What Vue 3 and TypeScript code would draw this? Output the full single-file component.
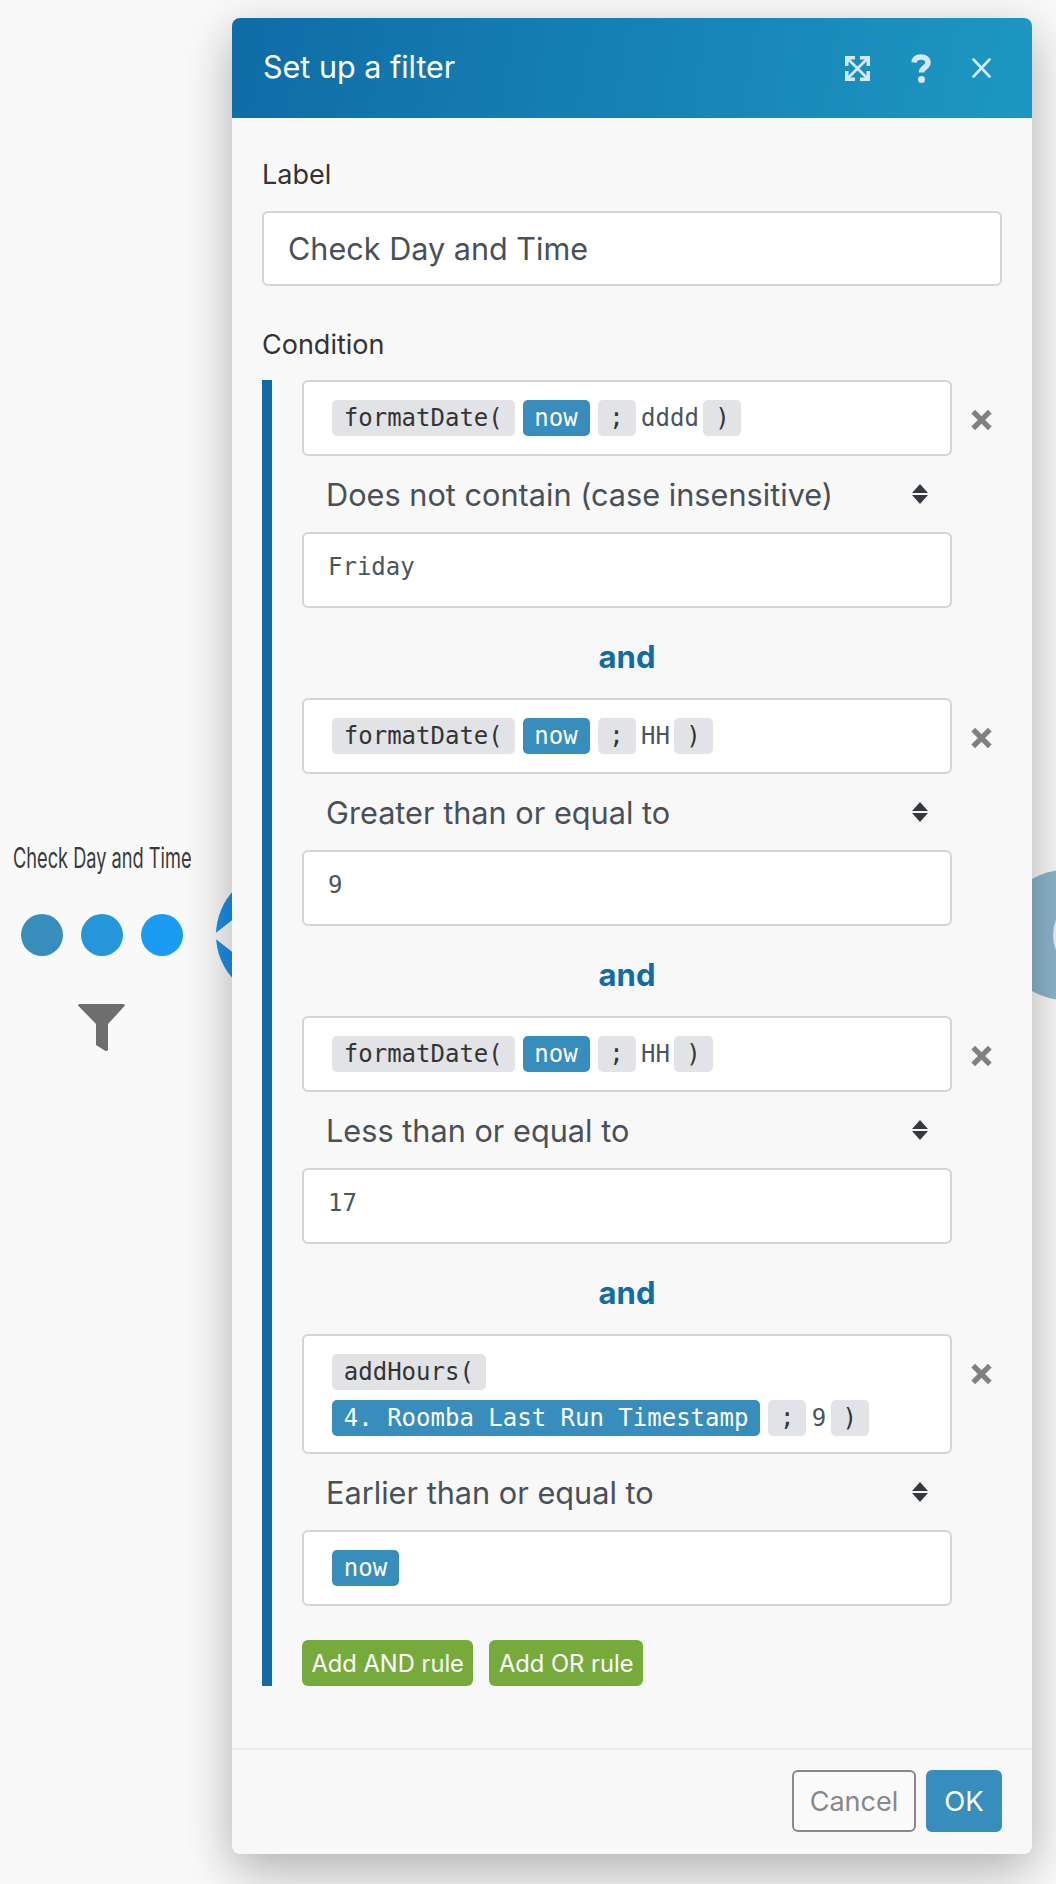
<script setup lang="ts">
type Part = { kind: 'fn' | 'var' | 'text'; text: string }
type Rule = {
  lines: Part[][]
  operator: string
  value: Part[]
}

const fn = (text: string): Part => ({ kind: 'fn', text })
const vr = (text: string): Part => ({ kind: 'var', text })
const tx = (text: string): Part => ({ kind: 'text', text })

const rules: Rule[] = [
  {
    lines: [[fn('formatDate('), vr('now'), fn(';'), tx('dddd'), fn(')')]],
    operator: 'Does not contain (case insensitive)',
    value: [tx('Friday')],
  },
  {
    lines: [[fn('formatDate('), vr('now'), fn(';'), tx('HH'), fn(')')]],
    operator: 'Greater than or equal to',
    value: [tx('9')],
  },
  {
    lines: [[fn('formatDate('), vr('now'), fn(';'), tx('HH'), fn(')')]],
    operator: 'Less than or equal to',
    value: [tx('17')],
  },
  {
    lines: [
      [fn('addHours(')],
      [vr('4. Roomba Last Run Timestamp'), fn(';'), tx('9'), fn(')')],
    ],
    operator: 'Earlier than or equal to',
    value: [vr('now')],
  },
]
</script>

<template>
  <div class="page">
    <div class="scenario">
      <span class="node-title">Check Day and Time</span>
      <span class="dot dot-a"></span>
      <span class="dot dot-b"></span>
      <span class="dot dot-c"></span>
      <svg class="funnel" viewBox="0 0 47 47">
        <path d="M1 0h45l1 1.500L30 20v26l-1.500 1h-1L18 41V20L0 1.500z" fill="#6e6e6e" />
      </svg>
      <div class="module module-left">
        <span class="notch"></span>
      </div>
      <div class="module module-right">
        <span class="module-inner"></span>
      </div>
    </div>

    <div class="modal">
      <header class="modal-head">
        <h1 class="modal-title">Set up a filter</h1>
        <svg class="head-icon icon-expand" viewBox="0 0 25 25">
          <path d="M0 0h10v3.500H3.500V10H0zM15 0h10v10h-3.500V3.500H15zM0 15h3.500v6.500H10V25H0zM21.500 15H25v10H15v-3.500h6.500z" fill="#d2e9f4" />
          <path d="M3 3l19 19M22 3L3 22" fill="none" stroke="#d2e9f4" stroke-width="2.800" />
        </svg>
        <svg class="head-icon icon-help" viewBox="0 0 20 29">
          <path d="M3 8.500C3.500 4.500 6.500 3 10 3c4 0 7 2 7 5.500 0 5-6.500 5-6.500 10" fill="none" stroke="#d2e9f4" stroke-width="5.500" />
          <circle cx="10.500" cy="25.500" r="3.500" fill="#d2e9f4" />
        </svg>
        <svg class="head-icon icon-close" viewBox="0 0 19 20">
          <path d="M1.500 1.500l16 17M17.500 1.500l-16 17" fill="none" stroke="#d2e9f4" stroke-width="2.600" stroke-linecap="round" />
        </svg>
      </header>

      <div class="modal-body">
        <div class="field-label">Label</div>
        <div class="text-input">Check Day and Time</div>

        <div class="field-label condition-label">Condition</div>
        <div class="condition">
          <template v-for="(rule, i) in rules" :key="i">
            <div v-if="i > 0" class="and-sep">and</div>
            <div class="rule-row">
              <div class="token-box" :class="{ 'token-box-multi': rule.lines.length > 1 }">
                <div v-for="(line, j) in rule.lines" :key="j" class="token-line">
                  <span v-for="(part, k) in line" :key="k" :class="['part', 'part-' + part.kind]">{{ part.text }}</span>
                </div>
              </div>
              <svg class="rule-remove" viewBox="0 0 24 24">
                <path d="M2.500 2.500l19 19M21.500 2.500l-19 19" fill="none" stroke="#808080" stroke-width="6" />
              </svg>
            </div>
            <div class="operator">
              <span>{{ rule.operator }}</span>
              <svg class="updown" viewBox="0 0 16 20">
                <path d="M8 0l8 9H0zM0 11h16l-8 9z" fill="#343a40" />
              </svg>
            </div>
            <div class="token-box">
              <div class="token-line">
                <span v-for="(part, k) in rule.value" :key="k" :class="['part', 'part-' + part.kind, 'value-' + part.kind]">{{ part.text }}</span>
              </div>
            </div>
          </template>
          <div class="add-rules">
            <button class="btn-green">Add AND rule</button>
            <button class="btn-green">Add OR rule</button>
          </div>
        </div>
      </div>

      <footer class="modal-foot">
        <button class="btn-cancel">Cancel</button>
        <button class="btn-ok">OK</button>
      </footer>
    </div>
  </div>
</template>

<style>
body {
  background: #f9f9f9;
}
</style>

<style scoped>
.page {
  position: relative;
  width: 1056px;
  height: 1884px;
  overflow: hidden;
  padding-top: 18px;
  box-sizing: border-box;
  background: #f9f9f9;
  font-family: Inter, "Liberation Sans", sans-serif;
}

/* the scenario canvas behind the dialog */
.scenario {
  position: absolute;
  inset: 0;
}

.node-title {
  position: absolute;
  left: 13px;
  top: 841px;
  font-size: 28px;
  line-height: 34px;
  color: #3a3a3a;
  white-space: nowrap;
  transform: scaleX(0.65);
  transform-origin: left center;
}

.dot {
  position: absolute;
  top: 914px;
  width: 42px;
  height: 42px;
  border-radius: 50%;
}

.dot-a {
  left: 21px;
  background: #378dbb;
}

.dot-b {
  left: 81px;
  background: #2596d9;
}

.dot-c {
  left: 141px;
  background: #1c9bf2;
}

.funnel {
  position: absolute;
  left: 78px;
  top: 1004px;
  width: 47px;
  height: 47px;
}

.module {
  position: absolute;
  width: 130px;
  height: 130px;
  border-radius: 50%;
  top: 870px;
}

.module-left {
  left: 216px;
  background: #1b8fe8;
}

.notch {
  position: absolute;
  left: -4px;
  top: 47px;
  width: 0;
  height: 0;
  border-top: 19px solid transparent;
  border-bottom: 19px solid transparent;
  border-left: 0;
  border-right: 24px solid #fafafa;
}

.module-right {
  left: 1000px;
  background: #8db5cb;
}

.module-inner {
  position: absolute;
  left: 53px;
  top: 25px;
  width: 80px;
  height: 80px;
  border-radius: 50%;
  background: #e8eff4;
}

.modal {
  position: relative;
  margin-left: 232px;
  width: 800px;
  height: 1836px;
  display: flex;
  flex-direction: column;
  border-radius: 8px;
  background: #f8f8f8;
  box-shadow: 0 16px 50px rgba(0, 0, 0, 0.3);
}

.modal-head {
  height: 100px;
  flex: none;
  display: flex;
  align-items: center;
  padding-left: 31px;
  border-radius: 8px 8px 0 0;
  background: linear-gradient(100deg, #0f6ca6, #1d97c2);
}

.modal-title {
  margin: 0 auto 3px 0;
  font-size: 30.5px;
  font-weight: 400;
  color: #fff;
}

.head-icon {
  flex: none;
}

.icon-expand {
  width: 25px;
  height: 25px;
  margin-right: 41px;
}

.icon-help {
  width: 20px;
  height: 29px;
  margin-right: 41px;
}

.icon-close {
  width: 19px;
  height: 20px;
  margin-right: 41px;
}

.modal-body {
  flex: 1;
  padding: 39px 30px 0;
}

.field-label {
  font-size: 27px;
  line-height: 36px;
  color: #333;
  margin-bottom: 18px;
}

.condition-label {
  margin-top: 41px;
  margin-bottom: 17px;
}

.text-input {
  height: 75px;
  box-sizing: border-box;
  display: flex;
  align-items: center;
  padding-left: 24px;
  border: 2px solid #d4d4d4;
  border-radius: 6px;
  background: #fff;
  font-size: 30.6px;
  color: #495057;
}

.condition {
  border-left: 10px solid #0f6ca6;
  padding-left: 30px;
  width: 730px;
  box-sizing: border-box;
}

.rule-row {
  display: flex;
  align-items: flex-start;
}

.token-box {
  width: 650px;
  flex: none;
  box-sizing: border-box;
  padding: 18px 0 18px 28px;
  display: flex;
  flex-direction: column;
  gap: 10px;
  border: 2px solid #d4d4d4;
  border-radius: 6px;
  background: #fff;
}

.token-box-multi {
  padding-bottom: 16px;
}

.token-line {
  display: flex;
  height: 36px;
}

.part {
  font-family: "DejaVu Sans Mono", "Liberation Mono", monospace;
  font-size: 24px;
  line-height: 36px;
  white-space: pre;
}

.part-fn,
.part-var {
  padding: 0 11.8px;
  margin-right: 8px;
  border-radius: 5px;
}

.part-fn {
  background: #e2e3e7;
  color: #333;
}

.part-var {
  background: #378dbb;
  color: #fff;
}

.part-text {
  margin-left: -2.500px;
  margin-right: 4.500px;
  color: #4a5560;
}

.value-text {
  margin-left: -4px;
  line-height: 30px;
}

.rule-remove {
  width: 24px;
  height: 24px;
  margin: 28px 0 0 19px;
}

.operator {
  height: 76px;
  width: 650px;
  box-sizing: border-box;
  padding: 0 24px;
  display: flex;
  align-items: center;
  justify-content: space-between;
  font-size: 30.7px;
  color: #495057;
}

.updown {
  width: 16px;
  height: 20px;
}

.and-sep {
  width: 650px;
  height: 90px;
  box-sizing: border-box;
  padding-top: 7px;
  display: flex;
  align-items: center;
  justify-content: center;
  font-size: 31px;
  font-weight: 700;
  color: #0f6ca6;
}

.add-rules {
  display: flex;
  gap: 16px;
  margin-top: 34px;
}

.btn-green {
  height: 46px;
  padding: 0 9.500px;
  border: 0;
  border-radius: 6px;
  background: #76ab3c;
  color: #fff;
  font-family: inherit;
  font-size: 23.7px;
}

.modal-foot {
  flex: none;
  display: flex;
  justify-content: flex-end;
  gap: 10px;
  padding: 20px 30px 22px;
  border-top: 2px solid #efefef;
}

.btn-cancel,
.btn-ok {
  height: 62px;
  border-radius: 6px;
  font-family: inherit;
  font-size: 27.500px;
}

.btn-cancel {
  width: 124px;
  border: 2px solid #888;
  background: #fafafa;
  color: #888;
  font-size: 27px;
}

.btn-ok {
  width: 76px;
  border: 0;
  background: #378dbb;
  color: #fff;
}
</style>
